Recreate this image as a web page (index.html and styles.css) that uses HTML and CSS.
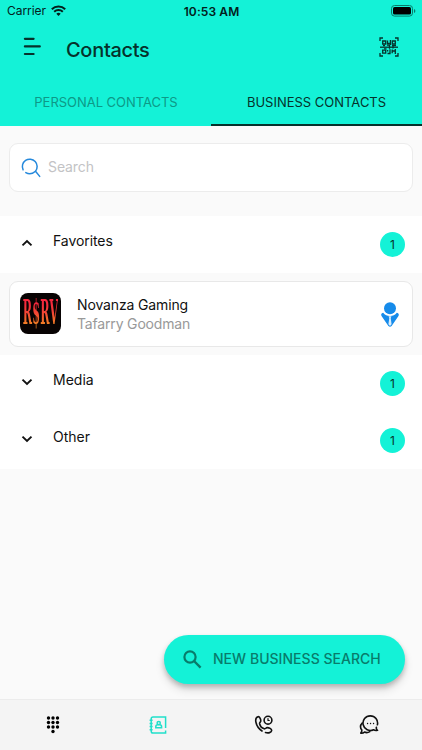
FILE: index.html
```html
<!DOCTYPE html>
<html lang="en">
<head>
<meta charset="utf-8">
<title>Contacts</title>
<link rel="stylesheet" href="styles.css">
</head>
<body>
<header class="header">
  <div class="status">
    <div class="carrier"><span>Carrier</span>
      <svg width="15" height="11" viewBox="0 0 15 11"><g fill="none" stroke="#03201b" stroke-width="2"><path d="M.8 4.200a9.700 9.700 0 0 1 13.400 0"/><path d="M3.200 6.800a6.200 6.200 0 0 1 8.600 0"/></g><path d="M7.500 10.900 5.300 8.700a3.200 3.200 0 0 1 4.400 0z" fill="#03201b"/></svg>
    </div>
    <div class="time">10:53 AM</div>
    <svg class="battery" width="25" height="12" viewBox="0 0 25 12"><rect x=".5" y=".5" width="21" height="10.600" rx="3" fill="none" stroke="#087c6b"/><rect x="2" y="2" width="18" height="7.600" rx="1.600"/><path d="M23 4v4q1.400-.6 1.400-2T23 4" fill="#087c6b"/></svg>
  </div>
  <div class="toolbar">
    <svg class="menu" width="18" height="19" viewBox="0 0 18 19" fill="none" stroke="#06322b" stroke-width="2.200" stroke-linecap="round"><path d="M1.900 1.800h8.700M1.900 9.400h14.900M1.900 17h8.700"/></svg>
    <h1 class="title">Contacts</h1>
    <svg class="qr" width="20" height="20" viewBox="0 0 20 20" fill="none" stroke="#06322b" stroke-width="1.300"><path d="M1 4V1h3M16 1h3v3M19 16v3h-3M4 19H1v-3"/><path d="M1 10.200h18"/><path d="M3.700 4h3v3h-3zM13.300 4h3v3h-3zM3.700 13.200h3v3h-3z"/><path d="M8.500 3.500v3h2.200M11.400 3v5M8 8.200h2.500v3.600M4 8.500h2M13 8.500h4M14 8.500v3M5 11.800h2.500M8.600 13v1.500M8.500 16.500H11v-4.300M13.200 12.500v3.700M13 14h3.400M16.300 12v5"/></svg>
  </div>
  <nav class="tabs">
    <div class="tab"><span class="t-personal">PERSONAL CONTACTS</span></div>
    <div class="tab active"><span class="t-business">BUSINESS CONTACTS</span></div>
  </nav>
</header>
<main class="content">
  <div class="search">
    <svg width="20" height="20" viewBox="0 0 20 20" fill="none" stroke="#2589dc" stroke-width="1.500" stroke-linecap="round"><path d="M2.100 11.800A7.400 7.400 0 1 1 14.500 13.200L18.700 18.400"/><path d="M4.800 14.600Q9.500 17.500 14.200 13.500"/></svg>
    <span>Search</span>
  </div>
  <section class="row">
    <svg class="chev" width="12" height="8" viewBox="0 0 12 8"><path d="M1.500 6.400 6 2l4.500 4.400"/></svg>
    <span class="name n-fav">Favorites</span><span class="count">1</span>
  </section>
  <article class="card">
    <div class="logo"><span>R$RV</span></div>
    <div class="info"><div class="company">Novanza Gaming</div><div class="person">Tafarry Goodman</div></div>
    <svg class="agent" width="18" height="25" viewBox="0 0 18 25" fill="#168bea"><circle cx="9" cy="6.300" r="6"/><path d="M2.200 10.800Q4.700 14 9 14T15.800 10.800C17.600 11 18.400 12.600 17.300 14.300L10.600 24Q9 25.600 7.400 24L.7 14.300C-.4 12.600.4 11 2.200 10.800z"/><path d="M7.500 14.200h3l-.8 1.800.9 6.200L9 24l-1.600-1.800.9-6.200z" fill="#d9edfd"/></svg>
  </article>
  <section class="row">
    <svg class="chev" width="12" height="8" viewBox="0 0 12 8"><path d="M1.500 1.600 6 6l4.500-4.400"/></svg>
    <span class="name n-media">Media</span><span class="count">1</span>
  </section>
  <section class="row">
    <svg class="chev" width="12" height="8" viewBox="0 0 12 8"><path d="M1.500 1.600 6 6l4.500-4.400"/></svg>
    <span class="name n-other">Other</span><span class="count">1</span>
  </section>
</main>
<button class="fab">
  <svg width="19" height="19" viewBox="0 0 19 19" fill="none" stroke="#087c6b" stroke-width="2.200"><circle cx="7" cy="7" r="5.600"/><path d="m11 11 6.600 6.600" stroke-width="2.400"/></svg>
  <span>NEW BUSINESS SEARCH</span>
</button>
<footer class="nav">
  <div><svg width="20" height="20" viewBox="0 0 20 20"><g><circle cx="5.500" cy="3" r="1.700"/><circle cx="10" cy="3" r="1.700"/><circle cx="14.500" cy="3" r="1.700"/><circle cx="5.500" cy="7.500" r="1.700"/><circle cx="10" cy="7.500" r="1.700"/><circle cx="14.500" cy="7.500" r="1.700"/><circle cx="5.500" cy="12" r="1.700"/><circle cx="10" cy="12" r="1.700"/><circle cx="14.500" cy="12" r="1.700"/><circle cx="10" cy="16.500" r="1.700"/></g></svg></div>
  <div><svg width="20" height="20" viewBox="0 0 20 20" fill="none" stroke="#20dfca" stroke-width="1.500"><path d="M17.600 13V2H5q-1.800 0-1.800 1.800v12.400Q3.200 18 5 18h12.600v-2.500"/><path d="M1.600 5.200h3M1.600 8.400h3M1.600 11.600h3M1.600 14.800h3"/><circle cx="10.700" cy="8" r="1.600"/><path d="M7.800 12.800v-1q0-2 2-2h1.800q2 0 2 2v1z"/></svg></div>
  <div><svg width="20" height="20" viewBox="0 0 20 20" fill="none" stroke="#111" stroke-width="1.600" stroke-linecap="round" stroke-linejoin="round"><path d="M8 16q-5-3.500-6-8.500C1.300 4.500 2 2.300 4 1.700c1.700-.4 2.800 2.800 2.800 4.200 0 1.200-1.500 1.300-1.200 2.800.6 2.600 2.300 4.400 4.700 5.100 1.300.3 1.600-1.100 2.800-1.200 1.800-.1 4.700 1.200 4.600 2.900-.2 2.100-3.500 2.900-6.200 2"/><circle cx="14" cy="5.200" r="3.900"/><path d="M14 3.500v2h1.300" stroke-width="1.200"/></svg></div>
  <div><svg width="20" height="20" viewBox="0 0 20 20" fill="none" stroke="#111" stroke-width="1.600" stroke-linecap="round" stroke-linejoin="round"><path d="M18.400 9.800A7.300 7.300 0 1 0 14.500 14.700Q16.100 15.900 18.500 15.300 16.900 14 17.400 12.200"/><path d="M3.200 8C1.300 10 1.300 13 2.800 15q.2 1.700-1 3.100 2.200.2 3.700-1 2.700 1.200 5.300-.5"/><path d="M8.500 8.500h.1M11.500 8.500h.1M14.500 8.500h.1" stroke-width="1.300"/></svg></div>
</footer>
</body>
</html>
```
FILE: styles.css
```css
* { box-sizing: border-box; }
body {
  margin: 0;
  height: 750px;
  display: flex;
  flex-direction: column;
  background: #fafafa;
  font-family: Inter, "Liberation Sans", sans-serif;
  color: #111;
  overflow: hidden;
}
svg { display: block; flex: none; }
.header { height: 126px; flex: none; background: #14f2d7; }
.status {
  height: 22px;
  display: grid;
  grid-template-columns: 1fr auto 1fr;
  align-items: center;
  padding: 0 6px 0 7px;
  font-size: 12px;
  color: #03201b;
}
.carrier { display: flex; align-items: center; gap: 5px; margin-top: -1px; letter-spacing: -.05px; }
.time { font-weight: 600; letter-spacing: .1px; }
.battery { justify-self: end; margin-top: -1px; }
.toolbar { height: 56px; display: flex; align-items: center; padding: 0 23px 0 23px; }
.menu { margin-top: -7px; }
.title { margin: -1px auto 0 25px; font-size: 20px; line-height: 24px; font-weight: 500; letter-spacing: -.3px; color: #06322b; }
.qr { margin-top: -7px; }
.tabs { height: 48px; display: flex; }
.tab {
  flex: 1;
  display: flex;
  align-items: center;
  justify-content: center;
  font-size: 13px;
  white-space: nowrap;
  color: #0d9987;
}
.t-personal { margin-left: 1px; letter-spacing: -.03px; }
.tab.active { color: #06322b; box-shadow: inset 0 -2px #06322b; }
.content { flex: 1; }
.search {
  height: 49px;
  margin: 17px 9px 24px;
  padding: 0 11px;
  display: flex;
  align-items: center;
  gap: 7px;
  background: #fff;
  border: 1px solid #ececec;
  border-radius: 9px;
  color: #c3c3c5;
  font-size: 14px;
}
.search span { margin-top: -2px; letter-spacing: -.1px; }
.row { height: 57px; display: flex; align-items: center; padding: 0 17px 0 21px; background: #fff; }
.chev { margin-top: -3px; fill: none; stroke: #111; stroke-width: 1.9; }
.name { margin: -9px auto 0 20px; font-size: 14px; }
.n-fav { letter-spacing: -.08px; }
.count {
  width: 25px;
  height: 25px;
  border-radius: 50%;
  background: #14f2d7;
  color: #06322b;
  font-size: 12px;
  line-height: 25px;
  text-align: center;
}
.card {
  height: 66px;
  margin: 8px 9px;
  padding: 0 13px 0 10px;
  display: flex;
  align-items: center;
  background: #fff;
  border: 1px solid #e8e8e8;
  border-radius: 9px;
}
.logo {
  width: 41px;
  height: 41px;
  display: flex;
  align-items: center;
  justify-content: center;
  margin-top: -1px;
  background: #080303;
  border-radius: 8px;
}
.logo span {
  font: bold 16px/20px "DejaVu Serif", serif;
  letter-spacing: .4px;
  background: linear-gradient(#f5283d 25%, #f44a33 50%, #f38324 75%);
  background-clip: text;
  -webkit-background-clip: text;
  color: transparent;
  transform: scale(.7, 2.1);
}
.info { margin: -1px auto 0 16px; font-size: 14px; line-height: 19px; white-space: nowrap; }
.company { letter-spacing: -.14px; }
.person { color: #999; letter-spacing: -.17px; }
.fab {
  position: absolute;
  left: 164px;
  top: 635px;
  width: 241px;
  height: 49px;
  padding: 0 0 0 19px;
  display: flex;
  align-items: center;
  gap: 11px;
  border: 0;
  border-radius: 25px;
  background: #14f2d7;
  box-shadow: 0 3px 5px rgba(0,0,0,.2), 0 6px 10px rgba(0,0,0,.12);
  font: 500 14px/20px Inter, sans-serif;
  letter-spacing: .03px;
  color: #087c6b;
  white-space: nowrap;
}
.fab span { margin-top: -1px; }
.nav { height: 51px; flex: none; display: flex; background: #f4f4f4; border-top: 1px solid #ececec; }
.nav div { flex: 1; display: flex; align-items: center; justify-content: center; }
```
